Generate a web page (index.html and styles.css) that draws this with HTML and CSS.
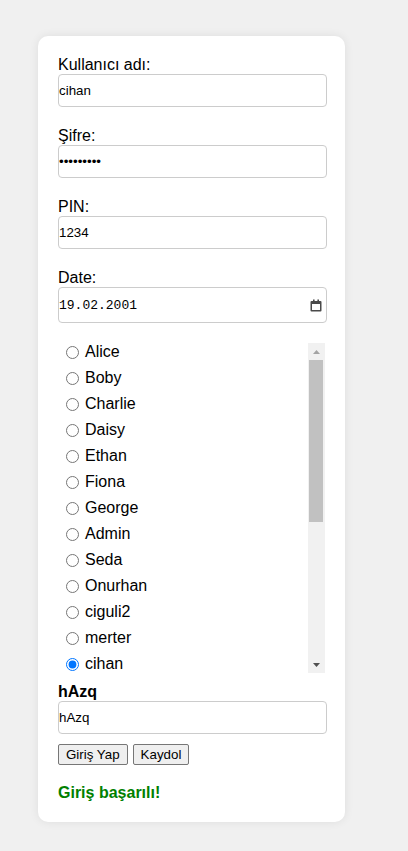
FILE: index.html
```html
<!DOCTYPE html>
<html lang="tr">
<head>
<meta charset="utf-8">
<title>Giriş</title>
<link rel="stylesheet" href="styles.css">
</head>
<body>
<div class="card">
  <div class="field">
    <label class="field-label" for="username">Kullanıcı adı:</label>
    <input class="text-input" id="username" type="text" value="cihan">
  </div>
  <div class="field">
    <label class="field-label" for="password">Şifre:</label>
    <input class="text-input" id="password" type="password" value="123456789">
  </div>
  <div class="field">
    <label class="field-label" for="pin">PIN:</label>
    <input class="text-input" id="pin" type="text" value="1234">
  </div>
  <div class="field">
    <label class="field-label" for="date">Date:</label>
    <div class="date-box">
      <input class="date-input" id="date" type="text" value="19.02.2001">
      <svg class="date-icon" width="12" height="13" viewBox="0 0 12 13" aria-hidden="true">
        <rect x="3" y="0.5" width="1.6" height="2.5" fill="#4a4a4a"/>
        <rect x="7.4" y="0.5" width="1.6" height="2.5" fill="#4a4a4a"/>
        <rect x="0.5" y="2" width="11" height="10.5" rx="1" fill="#4a4a4a"/>
        <rect x="2" y="5" width="8" height="6" fill="#fff"/>
      </svg>
    </div>
  </div>

  <div class="user-list">
    <div class="user-items">
      <label class="user-item"><input type="radio" name="user"><span>Alice</span></label>
      <label class="user-item"><input type="radio" name="user"><span>Boby</span></label>
      <label class="user-item"><input type="radio" name="user"><span>Charlie</span></label>
      <label class="user-item"><input type="radio" name="user"><span>Daisy</span></label>
      <label class="user-item"><input type="radio" name="user"><span>Ethan</span></label>
      <label class="user-item"><input type="radio" name="user"><span>Fiona</span></label>
      <label class="user-item"><input type="radio" name="user"><span>George</span></label>
      <label class="user-item"><input type="radio" name="user"><span>Admin</span></label>
      <label class="user-item"><input type="radio" name="user"><span>Seda</span></label>
      <label class="user-item"><input type="radio" name="user"><span>Onurhan</span></label>
      <label class="user-item"><input type="radio" name="user"><span>ciguli2</span></label>
      <label class="user-item"><input type="radio" name="user"><span>merter</span></label>
      <label class="user-item"><input type="radio" name="user" checked><span>cihan</span></label>
    </div>
    <div class="scrollbar" aria-hidden="true">
      <div class="scroll-btn">
        <svg width="7" height="4" viewBox="0 0 7 4"><polygon points="3.5,0 7,4 0,4" fill="#a3a3a3"/></svg>
      </div>
      <div class="scroll-track"><div class="scroll-thumb"></div></div>
      <div class="scroll-btn">
        <svg width="7" height="4" viewBox="0 0 7 4"><polygon points="0,0 7,0 3.5,4" fill="#505050"/></svg>
      </div>
    </div>
  </div>

  <div class="captcha-label">hAzq</div>
  <input class="text-input" type="text" value="hAzq">

  <div class="actions">
    <button class="btn" type="button">Giriş Yap</button>
    <button class="btn" type="button">Kaydol</button>
  </div>

  <div class="message">Giriş başarılı!</div>
</div>
</body>
</html>
```

FILE: styles.css
```css
html, body {
  margin: 0;
  padding: 0;
}

body {
  background: #f0f0f0;
  font-family: "Liberation Sans", Arial, sans-serif;
  font-size: 16px;
  color: #000;
  padding: 36px 0 28px 38px;
}

.card {
  width: 307px;
  box-sizing: border-box;
  padding: 20px;
  background: #fff;
  border-radius: 10px;
  box-shadow: 0 0 10px rgba(0, 0, 0, 0.08);
}

.field {
  margin-bottom: 20px;
}

.field-label {
  display: block;
  font-size: 16px;
  line-height: 18px;
}

.text-input {
  display: block;
  width: 100%;
  box-sizing: content-box;
  height: 15px;
  padding: 8px 0;
  margin: 0;
  border: 1px solid #ccc;
  border-radius: 4px;
  font-family: "Liberation Sans", Arial, sans-serif;
  font-size: 13.33px;
  color: #000;
  background: #fff;
  outline: none;
}

.date-box {
  display: flex;
  align-items: center;
  width: 100%;
  box-sizing: content-box;
  height: 34px;
  border: 1px solid #ccc;
  border-radius: 4px;
  background: #fff;
}

.date-input {
  flex: 1;
  min-width: 0;
  border: none;
  padding: 0;
  margin: 0;
  font-family: "Liberation Mono", "DejaVu Sans Mono", monospace;
  font-size: 13px;
  color: #000;
  background: transparent;
  outline: none;
}

.date-icon {
  display: block;
  margin-right: 4px;
  margin-top: 1px;
}

.user-list {
  display: flex;
  height: 330px;
  overflow: hidden;
}

.user-items {
  flex: 1;
  min-width: 0;
}

.scrollbar {
  display: flex;
  flex-direction: column;
  width: 17px;
  background: #f1f1f1;
}

.scroll-btn {
  height: 17px;
  display: flex;
  align-items: center;
  justify-content: center;
}

.scroll-btn svg {
  display: block;
}

.scroll-track {
  flex: 1;
  padding: 0 2px 0 1px;
}

.scroll-thumb {
  height: 162px;
  background: #c1c1c1;
}

.user-item {
  display: flex;
  align-items: center;
  gap: 6px;
  height: 18px;
  line-height: 18px;
  margin-bottom: 8px;
  font-size: 16px;
}

.user-item input {
  width: 13px;
  height: 13px;
  margin: 0 0 0 8px;
  accent-color: #0075ff;
}

.captcha-label {
  margin-top: 10px;
  font-weight: bold;
  font-size: 16px;
  line-height: 18px;
}

.actions {
  display: flex;
  gap: 5px;
  margin-top: 10px;
}

.btn {
  font-family: "Liberation Sans", Arial, sans-serif;
  font-size: 13.33px;
  height: 21px;
  padding: 1px 7px;
  border: 1px solid #767676;
  border-radius: 2px;
  background: #efefef;
  color: #000;
}

.message {
  margin-top: 19px;
  color: #008000;
  font-weight: bold;
  font-size: 16px;
  line-height: 18px;
}
```
